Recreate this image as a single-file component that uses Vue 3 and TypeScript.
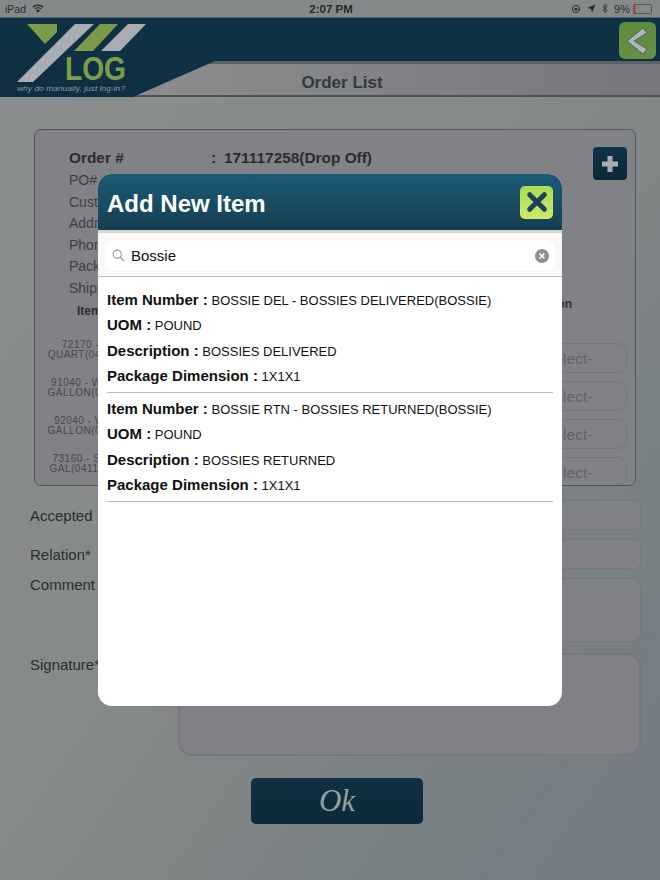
<script setup lang="ts">
import { ref } from "vue";

const search = ref("Bossie");

const orderRows = ["PO#", "Customer", "Address", "Phone", "Package", "Shipper"];

const lines = [
  ["72170 - WH", "QUART(0411725)"],
  ["91040 - WH MIL", "GALLON(041172)"],
  ["92040 - WH MI", "GALLON(041172)"],
  ["73160 - SR MIL", "GAL(041192580)"],
];

const results = [
  { number: "BOSSIE DEL - BOSSIES DELIVERED(BOSSIE)", description: "BOSSIES DELIVERED" },
  { number: "BOSSIE RTN - BOSSIES RETURNED(BOSSIE)", description: "BOSSIES RETURNED" },
];
</script>

<template>
  <div class="page">
    <div class="status">
      <div class="status-left">
        <span>iPad</span>
        <svg class="wifi" viewBox="0 0 14 10" width="12" height="9">
          <path d="M7 10 4.6 7.4a3.4 3.4 0 0 1 4.8 0z" fill="#26292b" />
          <path d="M3.6 6.3a5 5 0 0 1 6.8 0l1-1.1a6.5 6.5 0 0 0-8.8 0zM1.5 4.1a8 8 0 0 1 11 0l1-1.1a9.5 9.5 0 0 0-13 0z" fill="#26292b" />
        </svg>
      </div>
      <span class="clock">2:07 PM</span>
      <div class="status-right">
        <svg viewBox="0 0 10 10" width="10" height="10">
          <circle cx="5" cy="5" r="3.6" fill="none" stroke="#2b2e30" stroke-width="1" />
          <path d="M9.2 5 8 6.4 6.8 5z" fill="#2b2e30" />
          <rect x="3.4" y="4" width="3" height="2.4" fill="#2b2e30" />
        </svg>
        <svg class="arrow" viewBox="0 0 10 10" width="9" height="9">
          <path d="M9.6.4 5.6 9.6 4.5 5.5.4 4.4z" fill="#2b2e30" />
        </svg>
        <svg class="bt" viewBox="0 0 7 12" width="6" height="11">
          <path d="M.6 3.2 6 8.4 3.4 11V1L6 3.6.6 8.8" fill="none" stroke="#2b2e30" stroke-width="1" />
        </svg>
        <span class="pct">9%</span>
        <div class="battery"><div class="battery-fill"></div></div>
      </div>
    </div>

    <header class="top">
      <svg class="logo" viewBox="0 0 135 75" width="135" height="75">
        <polygon points="12,6 42,6 42,14 30,26" fill="#7d9a4a" />
        <polygon points="60,6 79,6 18,64 2,64" fill="#a9adb2" />
        <polygon points="85,6 103,6 78,33 59,33" fill="#7d9a4a" />
        <polygon points="113,6 131,6 105,33 86,33" fill="#a9adb2" />
        <text x="50" y="62" class="logo-word" textLength="61" lengthAdjust="spacingAndGlyphs">LOG</text>
        <text x="2" y="73" class="logo-tag" textLength="108" lengthAdjust="spacingAndGlyphs">why do manually, just log-in?</text>
      </svg>
      <button class="back" type="button">
        <svg viewBox="0 0 21 28" width="21" height="28">
          <polygon points="0,14 16,1 20,6 7,14 20,22 16,27" fill="#b3b6b8" stroke="#565b5e" stroke-width="1" stroke-linejoin="round" />
        </svg>
      </button>
      <div class="tab">Order List</div>
    </header>

    <main class="content">
      <section class="card">
        <button class="add" type="button">
          <svg viewBox="0 0 20 20" width="20" height="20">
            <path d="M10 2v16M2 10h16" stroke="#a9adb0" stroke-width="5" />
          </svg>
        </button>
        <div class="order-head">
          <span>Order #</span>
          <span class="colon">:</span>
          <span>171117258(Drop Off)</span>
        </div>
        <div v-for="row in orderRows" :key="row" class="order-row">{{ row }}</div>
        <div class="table-head">
          <span class="th-item">Item</span>
          <span class="th-action">Action</span>
        </div>
        <div v-for="line in lines" :key="line[0]" class="line">
          <div class="line-name">
            <div>{{ line[0] }}</div>
            <div>{{ line[1] }}</div>
          </div>
          <div class="select">-Select-</div>
        </div>
      </section>

      <div class="form-row accepted">
        <label>Accepted</label>
        <div class="field"></div>
      </div>
      <div class="form-row relation">
        <label>Relation*</label>
        <div class="field"></div>
      </div>
      <div class="form-row comment">
        <label>Comment</label>
        <div class="field tall"></div>
      </div>
      <div class="form-row signature">
        <label>Signature*</label>
        <div class="field sign"></div>
      </div>
      <button class="ok" type="button">Ok</button>
    </main>

    <div class="modal">
      <div class="modal-head">
        <h2>Add New Item</h2>
        <button class="close" type="button">
          <svg viewBox="0 0 24 24" width="22" height="22">
            <path d="M4 4l16 16M20 4 4 20" stroke="#1d4256" stroke-width="5.4" stroke-linecap="round" />
          </svg>
        </button>
      </div>
      <div class="search-bar">
        <div class="search">
          <svg viewBox="0 0 14 14" width="13" height="13">
            <circle cx="5.6" cy="5.6" r="4.4" fill="none" stroke="#8e8e93" stroke-width="1.1" />
            <path d="M8.8 8.8 13 13" stroke="#8e8e93" stroke-width="1.2" />
          </svg>
          <span class="search-text">{{ search }}</span>
          <svg viewBox="0 0 14 14" width="14" height="14">
            <circle cx="7" cy="7" r="7" fill="#8e8e93" />
            <path d="M4.6 4.6l4.8 4.8M9.4 4.6 4.6 9.4" stroke="#fff" stroke-width="1.5" />
          </svg>
        </div>
      </div>
      <div class="results">
        <div v-for="item in results" :key="item.number" class="result">
          <div class="result-line"><b>Item Number :</b> {{ item.number }}</div>
          <div class="result-line"><b>UOM :</b> POUND</div>
          <div class="result-line"><b>Description :</b> {{ item.description }}</div>
          <div class="result-line"><b>Package Dimension :</b> 1X1X1</div>
        </div>
      </div>
    </div>
  </div>
</template>

<style>
html,
body {
  margin: 0;
  background: #7f8486;
}
</style>

<style scoped>
.page {
  position: relative;
  width: 660px;
  height: 880px;
  overflow: hidden;
  display: flex;
  flex-direction: column;
  font-family: "Liberation Sans", Arial, sans-serif;
  color: #2b2e30;
  background: linear-gradient(125deg, #8a8d8d 0%, #868a88 45%, #7a8183 75%, #747b84 100%);
}

button {
  padding: 0;
  border: 0;
  font-family: inherit;
}

.status {
  height: 17px;
  flex: none;
  display: flex;
  align-items: center;
  justify-content: space-between;
  padding: 0 8px 0 5px;
  font-size: 10.5px;
  background: #85898a;
  position: relative;
}

.status-left {
  display: flex;
  align-items: center;
  gap: 6px;
}

.clock {
  position: absolute;
  left: 0;
  right: 0;
  text-align: center;
  font-size: 11.5px;
  font-weight: bold;
  color: #26292b;
  padding-left: 2px;
}

.status-right {
  display: flex;
  align-items: center;
}

.arrow {
  margin-left: 6px;
}

.bt {
  margin-left: 6px;
}

.pct {
  margin-left: 6px;
  font-size: 11px;
}

.battery {
  width: 17px;
  height: 8px;
  margin-left: 3px;
  border: 1px solid #55585a;
  border-radius: 2px;
}

.battery-fill {
  width: 2px;
  height: 100%;
  background: #c9463f;
}

.top {
  position: relative;
  height: 80px;
  flex: none;
  display: flex;
  flex-direction: column;
  justify-content: flex-end;
  box-sizing: border-box;
  border-top: 1px solid #4a6672;
  background: linear-gradient(#0e3144, #0f3042);
}

.logo {
  position: absolute;
  left: 15px;
  top: 0;
}

.logo-word {
  font-family: "Liberation Sans", sans-serif;
  font-weight: bold;
  font-size: 34px;
  fill: #7f9c4c;
}

.logo-tag {
  font-family: "Liberation Sans", sans-serif;
  font-style: italic;
  font-size: 8px;
  fill: #8d979b;
}

.back {
  position: absolute;
  right: 4px;
  top: 4px;
  width: 37px;
  height: 37px;
  border-radius: 6px;
  background: linear-gradient(#5f8b3e, #668f42);
  display: flex;
  align-items: center;
  justify-content: center;
}

.tab {
  height: 36px;
  margin-left: 133px;
  box-sizing: border-box;
  padding: 6px 109px 0 0;
  border-top: 3px solid #5c6165;
  border-bottom: 2px solid #505457;
  background: linear-gradient(90deg, #8b8c8e, #76787b);
  clip-path: polygon(0 100%, 82px 0, 100% 0, 100% 100%);
  text-align: center;
  font-size: 17px;
  line-height: 25px;
  font-weight: bold;
  color: #33393b;
}

.content {
  flex: 1;
  padding: 32px 19px 0 30px;
  display: flex;
  flex-direction: column;
}

.card {
  position: relative;
  height: 357px;
  flex: none;
  box-sizing: border-box;
  margin: 0 5px 0 4px;
  padding: 18px 8px 0 34px;
  overflow: hidden;
  border: 1px solid #515558;
  border-radius: 7px;
  background: #818285;
}

.add {
  position: absolute;
  top: 17px;
  right: 8px;
  width: 34px;
  height: 33px;
  border-radius: 4px;
  background: linear-gradient(#0e3347, #0c2836);
  display: flex;
  align-items: center;
  justify-content: center;
}

.order-head {
  display: flex;
  height: 22px;
  line-height: 20px;
  font-size: 15.4px;
  font-weight: bold;
  color: #2a2d2f;
}

.order-head span:first-child {
  width: 142px;
}

.colon {
  width: 13px;
}

.order-row {
  height: 21.5px;
  line-height: 20.5px;
  font-size: 14px;
  color: #3d4042;
}

.table-head {
  position: relative;
  height: 35px;
  margin-left: -34px;
  font-size: 12px;
  font-weight: bold;
  color: #2c2f31;
}

.th-item {
  position: absolute;
  left: 42px;
  top: 5px;
}

.th-action {
  position: absolute;
  right: 55px;
  top: -2px;
}

.line {
  display: flex;
  align-items: flex-start;
  justify-content: space-between;
  height: 38px;
  margin-left: -24px;
}

.line-name {
  width: 92px;
  margin-top: 6px;
  font-size: 10px;
  line-height: 10px;
  letter-spacing: 0.5px;
  text-align: center;
  white-space: nowrap;
  color: #45494b;
}

.select {
  width: 100px;
  height: 30px;
  margin-top: 9px;
  box-sizing: border-box;
  padding-left: 11px;
  border: 1px solid #76767a;
  border-radius: 10px;
  font-size: 15.5px;
  line-height: 29px;
  color: #626265;
}

.form-row {
  display: flex;
  font-size: 15px;
  color: #2b2e30;
}

.form-row label {
  width: 148px;
  flex: none;
}

.field {
  flex: 1;
  height: 30px;
  box-sizing: border-box;
  border: 1px solid #76777a;
  border-radius: 5px;
  background: #818285;
}

.accepted {
  margin-top: 14px;
  align-items: center;
}

.relation {
  margin-top: 9px;
  align-items: center;
}

.comment {
  margin-top: 9px;
}

.comment label {
  line-height: 14px;
}

.tall {
  height: 64px;
  border-radius: 10px;
}

.signature {
  margin-top: 11px;
}

.signature label {
  line-height: 24px;
}

.sign {
  height: 103px;
  border-radius: 14px;
  border-width: 2px;
}

.ok {
  width: 172px;
  height: 46px;
  margin: 22px 0 0 221px;
  border-radius: 5px;
  background: linear-gradient(#0f3040, #0c2a38);
  color: #95a0a3;
  font-family: "Liberation Serif", serif;
  font-style: italic;
  font-size: 31px;
  line-height: 46px;
}

.modal {
  position: absolute;
  left: 98px;
  top: 174px;
  width: 464px;
  height: 532px;
  overflow: hidden;
  border-radius: 14px;
  background: #fff;
  color: #111;
}

.modal-head {
  height: 56px;
  display: flex;
  align-items: center;
  justify-content: space-between;
  padding: 0 9px;
  border-bottom: 3px solid #d4d6d6;
  background: linear-gradient(#1b5b76, #163f50);
}

.modal-head h2 {
  margin: 3px 0 0;
  font-size: 24px;
  font-weight: bold;
  color: #fff;
}

.close {
  width: 33px;
  height: 33px;
  border-radius: 5px;
  background: linear-gradient(#a6dc52, #cfe96a);
  display: flex;
  align-items: center;
  justify-content: center;
}

.search-bar {
  height: 44px;
  box-sizing: border-box;
  padding: 7px 7px 0;
  border-bottom: 1px solid #bcbcbe;
  background: #f8f8f8;
}

.search {
  height: 31px;
  box-sizing: border-box;
  display: flex;
  align-items: center;
  padding: 0 6px 0 7px;
  border-radius: 10px;
  background: #fff;
}

.search-text {
  flex: 1;
  margin-left: 6px;
  font-size: 15px;
}

.results {
  padding: 0 9px;
}

.result {
  padding: 10px 0 4px;
  border-bottom: 1px solid #bcbcbe;
}

.result + .result {
  padding-top: 3px;
}

.result-line {
  height: 25.3px;
  line-height: 25px;
  font-size: 13px;
  white-space: nowrap;
}

.result-line b {
  font-size: 15px;
  color: #111;
}
</style>
